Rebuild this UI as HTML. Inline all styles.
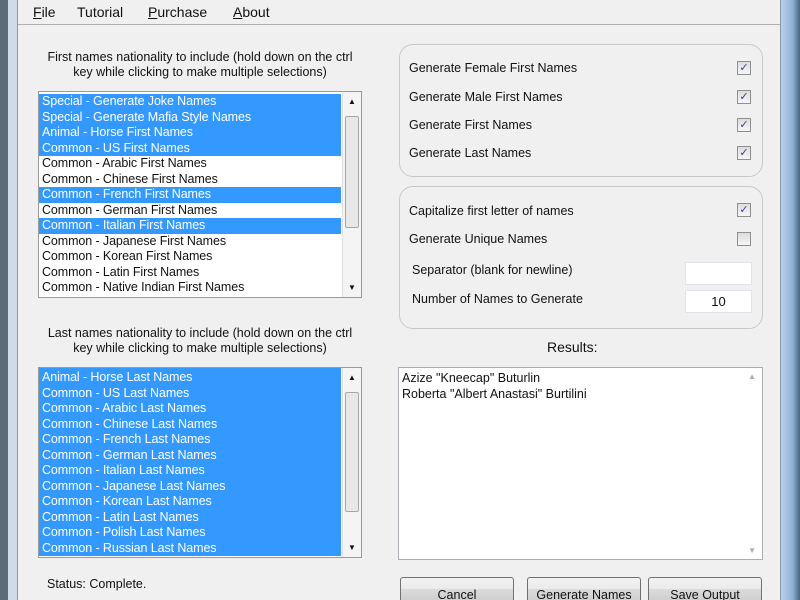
<!DOCTYPE html>
<html><head><style>
*{margin:0;padding:0;box-sizing:border-box}
html,body{width:800px;height:600px;overflow:hidden}
body{background:#f0f0f0;font-family:"Liberation Sans",sans-serif;font-size:12.5px;color:#111;position:relative}
.a{position:absolute}
.lb{position:absolute;background:#fff;border:1px solid #9a9a9a}
.it{height:15.5px;line-height:15.5px;padding-left:3px;white-space:nowrap;font-size:12.5px;letter-spacing:-0.1px}
.s{background:#3399ff;color:#fff}
.sb{position:absolute;right:0;top:0;bottom:0;width:19px;background:#f4f4f4;border-left:1px solid #e0e0e0}
.th{position:absolute;left:2px;right:2px;background:#e8e8e8;border:1px solid #a8a8a8;border-radius:2px}
.grp{position:absolute;border:1px solid #c8c8c8;border-radius:14px}
.cb{position:absolute;left:737px;width:14px;height:14px;border:1px solid #8e8f8f;background:linear-gradient(#ddd,#f6f6f6);font-size:11px;line-height:12px;text-align:center;color:#3a3aa0}
.btn{position:absolute;top:577px;height:23px;width:114px;border:1px solid #707070;border-bottom:none;border-radius:3px 3px 0 0;background:linear-gradient(#f2f2f2,#ebebeb 50%,#dcdcdc 50%,#cfcfcf);text-align:center;line-height:34px;font-size:12.5px;overflow:hidden}
.inp{position:absolute;left:685px;width:67px;height:23px;background:#fff;border:1px solid #e2e3ea}
</style></head><body>
<div class="a" style="left:0;top:0;width:8px;height:600px;background:#5c6b78"></div>
<div class="a" style="left:8px;top:0;width:10px;height:600px;background:#cfdbe6"></div>
<div class="a" style="left:17px;top:0;width:1px;height:600px;background:#8a97a4"></div>
<div class="a" style="left:780px;top:0;width:1px;height:600px;background:#8a97a4"></div>
<div class="a" style="left:781px;top:0;width:19px;height:600px;background:linear-gradient(90deg,#b9d1ea,#8fb3d9 60%,#4a6580)"></div>
<div class="a" style="left:18px;top:24px;width:762px;height:1px;background:#b0b0b0"></div>
<div class="a" style="left:33px;top:4px;font-size:14px"><u>F</u>ile</div>
<div class="a" style="left:77px;top:4px;font-size:14px">Tutorial</div>
<div class="a" style="left:148px;top:4px;font-size:14px"><u>P</u>urchase</div>
<div class="a" style="left:233px;top:4px;font-size:14px"><u>A</u>bout</div>

<div class="a" style="left:38px;top:50px;width:324px;text-align:center;line-height:15px">First names nationality to include (hold down on the ctrl key while clicking to make multiple selections)</div>
<div class="lb" style="left:38px;top:91px;width:324px;height:207px">
<div style="padding-top:2px;width:302px">
<div class="it s">Special - Generate Joke Names</div>
<div class="it s">Special - Generate Mafia Style Names</div>
<div class="it s">Animal - Horse First Names</div>
<div class="it s">Common - US First Names</div>
<div class="it">Common - Arabic First Names</div>
<div class="it">Common - Chinese First Names</div>
<div class="it s">Common - French First Names</div>
<div class="it">Common - German First Names</div>
<div class="it s">Common - Italian First Names</div>
<div class="it">Common - Japanese First Names</div>
<div class="it">Common - Korean First Names</div>
<div class="it">Common - Latin First Names</div>
<div class="it">Common - Native Indian First Names</div>
</div>
<div class="sb"><div class="a" style="left:5px;top:5px;font-size:8px">▲</div><div class="th" style="top:24px;height:112px"></div><div class="a" style="left:5px;bottom:5px;font-size:8px">▼</div></div>
</div>

<div class="a" style="left:38px;top:326px;width:324px;text-align:center;line-height:15px">Last names nationality to include (hold down on the ctrl key while clicking to make multiple selections)</div>
<div class="lb" style="left:38px;top:367px;width:324px;height:191px">
<div style="padding-top:2px;width:302px;background:#3399ff;height:187px">
<div class="it s">Animal - Horse Last Names</div>
<div class="it s">Common - US Last Names</div>
<div class="it s">Common - Arabic Last Names</div>
<div class="it s">Common - Chinese Last Names</div>
<div class="it s">Common - French Last Names</div>
<div class="it s">Common - German Last Names</div>
<div class="it s">Common - Italian Last Names</div>
<div class="it s">Common - Japanese Last Names</div>
<div class="it s">Common - Korean Last Names</div>
<div class="it s">Common - Latin Last Names</div>
<div class="it s">Common - Polish Last Names</div>
<div class="it s">Common - Russian Last Names</div>
</div>
<div class="sb"><div class="a" style="left:5px;top:5px;font-size:8px">▲</div><div class="th" style="top:24px;height:120px"></div><div class="a" style="left:5px;bottom:5px;font-size:8px">▼</div></div>
</div>

<div class="grp" style="left:399px;top:44px;width:364px;height:133px"></div>
<div class="grp" style="left:399px;top:186px;width:364px;height:143px"></div>
<div class="a" style="left:409px;top:61px">Generate Female First Names</div>
<div class="a" style="left:409px;top:90px">Generate Male First Names</div>
<div class="a" style="left:409px;top:118px">Generate First Names</div>
<div class="a" style="left:409px;top:146px">Generate Last Names</div>
<div class="a" style="left:409px;top:204px">Capitalize first letter of names</div>
<div class="a" style="left:409px;top:232px">Generate Unique Names</div>
<div class="a" style="left:412px;top:263px">Separator (blank for newline)</div>
<div class="a" style="left:412px;top:292px">Number of Names to Generate</div>
<div class="cb" style="top:61px">✓</div>
<div class="cb" style="top:90px">✓</div>
<div class="cb" style="top:118px">✓</div>
<div class="cb" style="top:146px">✓</div>
<div class="cb" style="top:203px">✓</div>
<div class="cb" style="top:232px"></div>
<div class="inp" style="top:262px"></div>
<div class="inp" style="top:290px;text-align:center;line-height:22px;font-size:13px">10</div>

<div class="a" style="left:547px;top:339px;font-size:14px">Results:</div>
<div class="lb" style="left:398px;top:367px;width:365px;height:193px;border-color:#abadb3">
<div style="padding:3px 3px;line-height:15.5px">Azize "Kneecap" Buturlin<br>Roberta "Albert Anastasi" Burtilini</div>
<div class="a" style="right:6px;top:4px;font-size:8px;color:#aaa">▲</div>
<div class="a" style="right:6px;bottom:4px;font-size:8px;color:#aaa">▼</div>
</div>

<div class="a" style="left:47px;top:577px">Status: Complete.</div>
<div class="btn" style="left:400px">Cancel</div>
<div class="btn" style="left:527px">Generate Names</div>
<div class="btn" style="left:648px">Save Output</div>
</body></html>
